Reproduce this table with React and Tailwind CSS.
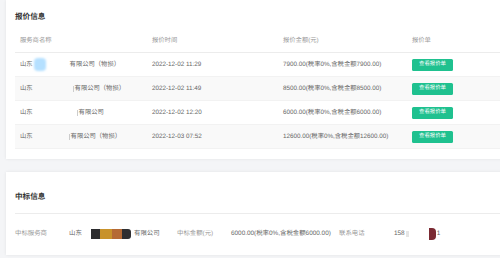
import React from "react";

const rows = [
  { time: "2022-12-02 11:29", amount: "7900.00(税率0%,含税金额7900.00)", name: "有限公司（物损）", gap: 37, blob: true, mark: false },
  { time: "2022-12-02 11:49", amount: "8500.00(税率0%,含税金额8500.00)", name: "有限公司（物损）", gap: 40, blob: false, mark: true },
  { time: "2022-12-02 12:20", amount: "6000.00(税率0%,含税金额6000.00)", name: "有限公司", gap: 44, blob: false, mark: true },
  { time: "2022-12-03 07:52", amount: "12600.00(税率0%,含税金额12600.00)", name: "有限公司（物损）", gap: 36, blob: false, mark: true },
];

export default function App() {
  return (
    <div lang="zh-CN" className="antialiased [text-rendering:geometricPrecision] w-[500px] h-[258px] overflow-hidden bg-[#f4f5f7] font-['Liberation_Sans','Noto_Sans_CJK_SC',sans-serif]">
      {/* Card 1 */}
      <div className="ml-[6px] w-[520px] h-[159px] bg-white shadow-[0_0_3px_rgba(0,0,0,0.08)] pt-[12px] pl-[9px]">
        <div className="text-[7.6px] leading-[10px] font-bold text-[#333]">报价信息</div>
        <div className="mt-[8px] text-[6.3px] text-[#666]">
          <div className="h-[23px] flex items-center border-b border-[#ececec] text-[#999]">
            <div className="w-[137px] pl-[5px]">服务商名称</div>
            <div className="w-[131px]">报价时间</div>
            <div className="w-[129px]">报价金额(元)</div>
            <div>报价单</div>
          </div>
          {rows.map((r, i) => (
            <div
              key={i}
              className={`h-[24px] flex items-center border-b border-[#f2f2f2] ${i % 2 === 1 ? "bg-[#f9f9f9]" : "bg-white"}`}
            >
              <div className="w-[137px] pl-[5px] flex items-center text-[#666]">
                <span>山东</span>
                {r.blob ? (
                  <span className="ml-[1px] mr-[24px] w-[12px] h-[13px] rounded-[4px] bg-[#b5e0ff] blur-[1px]" />
                ) : (
                  <span style={{ width: r.gap }} className="inline-block" />
                )}
                {r.mark && <span className="w-[1px] h-[6px] bg-[#ccc] mr-[1px]" />}
                <span>{r.name}</span>
              </div>
              <div className="w-[131px]">{r.time}</div>
              <div className="w-[129px]">{r.amount}</div>
              <div>
                <div className="w-[41px] h-[12px] rounded-[1.5px] bg-[#1fc18f] text-white text-[5.4px] flex items-center justify-center">
                  查看报价单
                </div>
              </div>
            </div>
          ))}
        </div>
      </div>

      {/* Card 2 */}
      <div className="mt-[13px] ml-[6px] w-[520px] h-[83px] bg-white shadow-[0_0_3px_rgba(0,0,0,0.08)] pt-[19px] pl-[9px]">
        <div className="text-[7.6px] leading-[11px] font-bold text-[#333]">中标信息</div>
        <div className="mt-[11px] border-t border-[#ececec] h-[40px] flex items-center text-[6.4px] text-[#666]">
          <div className="w-[54px] text-[#999]">中标服务商</div>
          <div className="w-[108px] flex items-center">
            <span className="w-[22px]">山东</span>
            <span className="flex h-[10px] blur-[0.4px]">
              <span className="w-[9px] bg-[#2c2c2e]" />
              <span className="w-[12px] bg-[#c8922b]" />
              <span className="w-[10px] bg-[#b56a35]" />
              <span className="w-[9px] bg-[#2f2f31] rounded-r-[3px]" />
            </span>
            <span className="ml-[3px]">有限公司</span>
          </div>
          <div className="w-[54px] text-[#999]">中标金额(元)</div>
          <div className="w-[108px]">6000.00(税率0%,含税金额6000.00)</div>
          <div className="w-[55px] text-[#999]">联系电话</div>
          <div className="flex items-center">
            <span>158</span>
            <span className="w-[3px] h-[6px] bg-[#e5e5e5] ml-[1px] blur-[0.5px]" />
            <span className="ml-[20px] w-[7px] h-[12px] bg-[#7b2a33] rounded-r-[4px] blur-[0.5px]" />
            <span className="ml-[1px]">1</span>
          </div>
        </div>
      </div>
    </div>
  );
}
